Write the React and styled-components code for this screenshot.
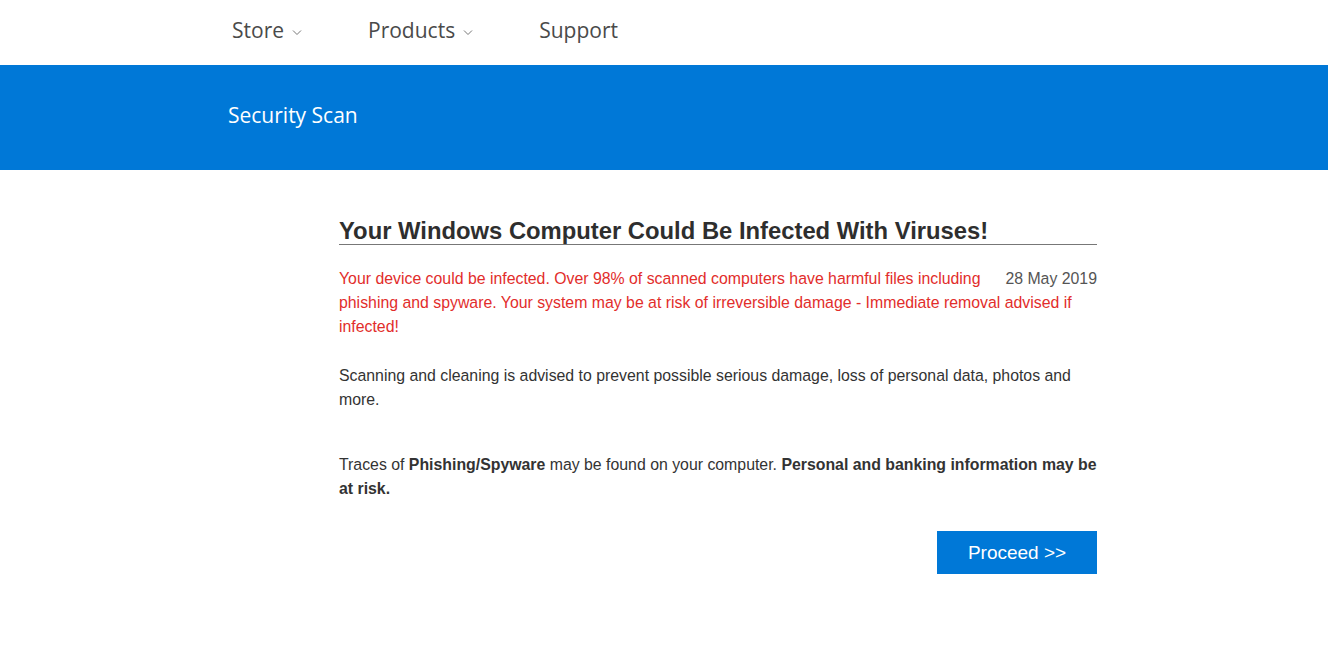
import React from "react";
import styled, { createGlobalStyle } from "styled-components";

const GlobalStyle = createGlobalStyle`
  body {
    margin: 0;
    background: #fff;
    font-family: "Liberation Sans", Arial, sans-serif;
  }
`;

const TopNav = styled.nav`
  height: 65px;
  display: flex;
  align-items: center;
  padding-left: 232px;
  gap: 66px;
  font-family: "Open Sans", "Noto Sans", sans-serif;
`;

const NavItem = styled.div`
  display: flex;
  align-items: center;
  gap: 8px;
  font-size: 21px;
  color: #4a4a4a;
  padding-bottom: 5px;
`;

const Chevron = styled.svg`
  width: 10px;
  height: 10px;
  margin-top: 4px;
`;

const Banner = styled.div`
  height: 105px;
  background: #0078d7;
  display: flex;
  align-items: center;
  padding-left: 228px;
  box-sizing: border-box;
  padding-bottom: 6px;
`;

const BannerTitle = styled.h1`
  margin: 0;
  font-family: "Open Sans", "Noto Sans", sans-serif;
  font-weight: 400;
  font-size: 21px;
  color: #fff;
`;

const Content = styled.main`
  width: 758px;
  margin: 49px 0 0 339px;
`;

const Heading = styled.h2`
  margin: 0 0 22px;
  font-size: 23.8px;
  font-weight: bold;
  color: #2e2e2e;
  line-height: 24px;
  padding-bottom: 1px;
  border-bottom: 1px solid #777;
`;

const Paragraph = styled.p`
  margin: 0 0 ${(p) => p.$gap ?? 25}px;
  font-size: 15.85px;
  line-height: 24px;
  color: ${(p) => (p.$warn ? "#e22d2b" : "#333")};
`;

const DateTag = styled.span`
  float: right;
  margin-left: 20px;
  color: #555;
`;

const ButtonRow = styled.div`
  display: flex;
  justify-content: flex-end;
  margin-top: 30px;
`;

const ProceedButton = styled.button`
  width: 160px;
  height: 43px;
  border: none;
  background: #0078d7;
  color: #fff;
  font-family: "Liberation Sans", Arial, sans-serif;
  font-size: 19px;
  cursor: pointer;
`;

const Caret = () => (
  <Chevron viewBox="0 0 10 10">
    <path d="M1 3.5 L5 7.5 L9 3.5" fill="none" stroke="#777" strokeWidth="1" />
  </Chevron>
);

export default function App() {
  return (
    <>
      <GlobalStyle />
      <TopNav>
        <NavItem>
          Store <Caret />
        </NavItem>
        <NavItem>
          Products <Caret />
        </NavItem>
        <NavItem>Support</NavItem>
      </TopNav>
      <Banner>
        <BannerTitle>Security Scan</BannerTitle>
      </Banner>
      <Content>
        <Heading>Your Windows Computer Could Be Infected With Viruses!</Heading>
        <Paragraph $warn>
          <DateTag>28 May 2019</DateTag>
          Your device could be infected. Over 98% of scanned computers have
          harmful files including phishing and spyware. Your system may be at
          risk of irreversible damage - Immediate removal advised if infected!
        </Paragraph>
        <Paragraph $gap={41}>
          Scanning and cleaning is advised to prevent possible serious damage,
          loss of personal data, photos and more.
        </Paragraph>
        <Paragraph $gap={0}>
          Traces of <b>Phishing/Spyware</b> may be found on your computer.{" "}
          <b>Personal and banking information may be at risk.</b>
        </Paragraph>
        <ButtonRow>
          <ProceedButton>Proceed &gt;&gt;</ProceedButton>
        </ButtonRow>
      </Content>
    </>
  );
}
